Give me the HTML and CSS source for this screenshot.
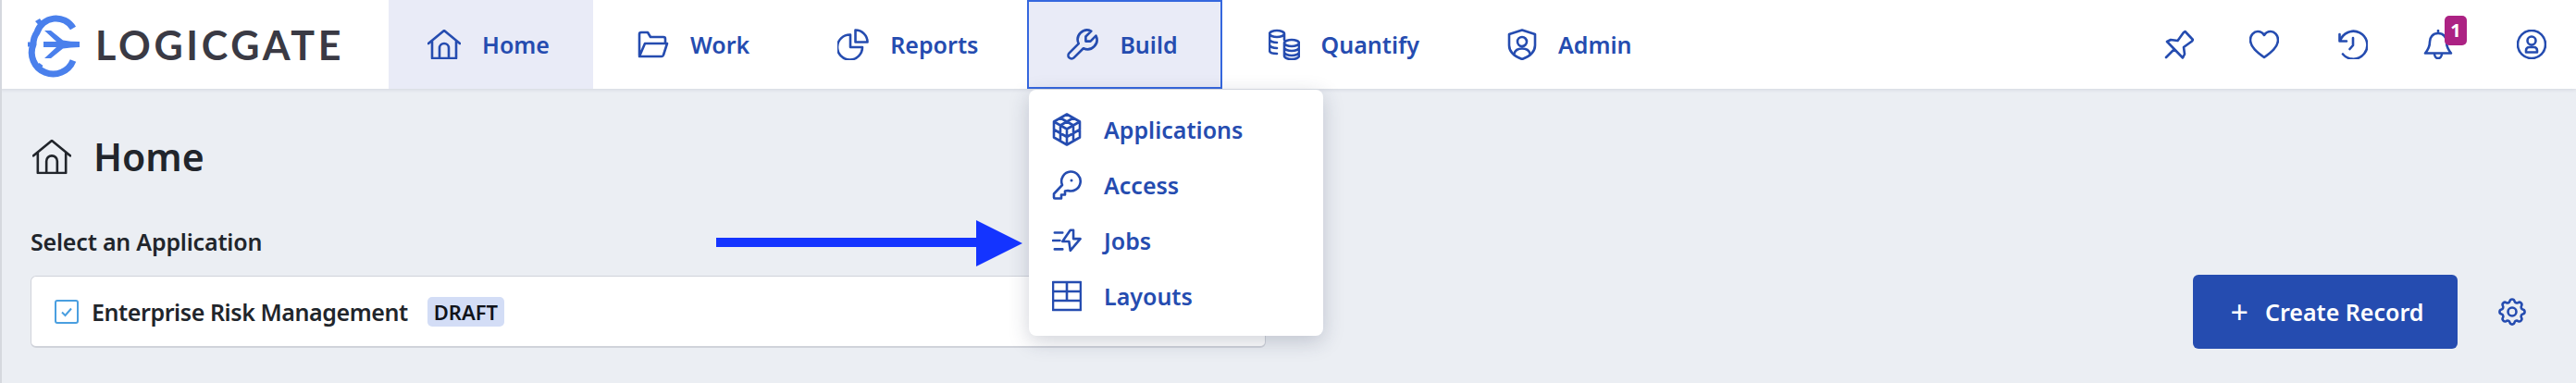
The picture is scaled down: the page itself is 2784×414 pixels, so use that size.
FILE: index.html
```html
<!DOCTYPE html>
<html lang="en">
<head>
    <meta charset="UTF-8">
    <title>Home</title>
    <link rel="stylesheet" href="styles.css">
</head>
<body>

<svg class="defs" width="0" height="0">
    <symbol id="i-home" viewBox="0 0 36 32">
        <path d="M1 15 18 1l17 14M5 12v19h26V12M13 31V20a5 5 0 0 1 10 0v11"/>
    </symbol>
</svg>

<header class="topbar">
    <div class="brand">
        <svg class="logo" viewBox="0 0 56 54">
            <path class="logo-ring" d="M49 9.500A21.500 21.500 0 0 0 10 14 21.500 21.500 0 0 0 6 27a21.500 21.500 0 0 0 43 17.500"/>
            <path class="logo-fill" d="M0 24.500h6v5H0zM8 2l5-3 3.500 5-4 3zM8 52l5 3 3.500-5-4-3zM17 24h14L18 12h7l13 10.500q8 1.500 18 1.500v6q-10 0-18 1.500L25 42h-7l13-12H17z"/>
        </svg>
        <span class="wordmark">LOGICGATE</span>
    </div>

    <nav class="nav">
        <a class="nav-item active" href="#">
            <svg class="icon w36" viewBox="0 0 36 32"><use href="#i-home"/></svg>
            Home
        </a>
        <a class="nav-item" href="#">
            <svg class="icon" viewBox="0 0 34 30"><path d="M2 27V4a2 2 0 0 1 2-2h7l3 5h14a2 2 0 0 1 2 2v4M2 28 8 14h24l-4 12.500a2 2 0 0 1-2 1.500H3a1 1 0 0 1-1-1"/></svg>
            Work
        </a>
        <a class="nav-item" href="#">
            <svg class="icon" viewBox="0 0 34 34"><path d="M14 6.500A13.500 13.500 0 1 0 27 20H14zM19.500 1.500A13 13 0 0 1 32.500 14.500h-13z"/></svg>
            Reports
        </a>
        <a class="nav-item open" href="#">
            <svg class="icon" viewBox="2 2 20 20"><path transform="matrix(-1 0 0 1 24 0)" d="M7 10h3V7L6.500 3.500a6 6 0 0 1 8 8l6 6a2 2 0 0 1-3 3l-6-6a6 6 0 0 1-8-8L7 10"/></svg>
            Build
        </a>
        <a class="nav-item" href="#">
            <svg class="icon" viewBox="0 0 34 34"><path d="M9 2c4 0 8 1.500 8 3.500S13 9 9 9 1 7.500 1 5.500 5 2 9 2zM1 5.500v18c0 2 3 3.500 8 3.500M1 11.500C1 13.500 5 15 9 15M1 17.500c0 2 4 3.500 8 3.500M17 5.500V12M25 12c4 0 8 1.500 8 3.500S29 19 25 19s-8-1.500-8-3.500S21 12 25 12zM17 15.500v14c0 2 4 3.500 8 3.500s8-1.500 8-3.500v-14M17 20.500c0 2 4 3.500 8 3.500s8-1.500 8-3.500M17 25.500c0 2 4 3.500 8 3.500s8-1.500 8-3.500"/></svg>
            Quantify
        </a>
        <a class="nav-item" href="#">
            <svg class="icon w32" viewBox="0 0 32 34"><path d="M16 1.500 30 6v12c0 7-6 12-14 15C8 30 2 25 2 18V6zM16 9a5 5 0 1 1 0 10 5 5 0 0 1 0-10zM7.500 27c1-4 4-5.500 8.500-5.500s7.500 1.500 8.500 5.500"/></svg>
            Admin
        </a>
    </nav>

    <div class="tools">
        <svg class="tool pin" viewBox="0 0 32 32"><path d="M2 30 11 21M3 13l4-2 7.500 1L21 3l1.500-1L31 11l-1 1.500-9 6.500 1 7.500-2 4z"/></svg>
        <svg class="tool" viewBox="0 0 32 32"><path d="M16 30C9 25 1 19 1 11c0-5 4-9 8-9 3 0 5.500 1.500 7 4 1.500-2.500 4-4 7-4 4 0 8 4 8 9 0 8-8 14-15 19z"/></svg>
        <svg class="tool" viewBox="0 0 32 32"><path d="M1.500 5v7.500H9M2 12.500A15 15 0 1 1 5 26.500M16 9v8l-3.500 4"/></svg>
        <div class="bell">
            <svg class="tool" viewBox="0 0 30 32"><path d="M15 1v3M15 4c-6 0-9 4.500-9 9 0 6-2 9-5 12.500h28C26 22 24 19 24 13c0-4.500-3-9-9-9zM11 26c0 3 2 5 4 5s4-2 4-5"/></svg>
            <span class="badge">1</span>
        </div>
        <svg class="tool" viewBox="0 0 32 32"><path d="M16 1a15 15 0 1 1 0 30 15 15 0 0 1 0-30zM16 7.500a4.500 4.500 0 1 1 0 9 4.500 4.500 0 0 1 0-9zM10 24.500v-2c0-2 1.500-3.500 3.500-3.500h5c2 0 3.500 1.500 3.500 3.500v2z"/></svg>
    </div>
</header>

<main class="page">
    <h1 class="page-title">
        <svg class="title-icon" viewBox="0 0 36 32"><use href="#i-home"/></svg>
        Home
    </h1>

    <div class="row">
        <div class="app-select">
            <label class="field-label">Select an Application</label>
            <div class="select-box">
                <span class="check">
                    <svg viewBox="0 0 14 14"><path d="M2 7.500 5.500 11 12 3.500"/></svg>
                </span>
                <span class="app-name">Enterprise Risk Management</span>
                <span class="pill">DRAFT</span>
            </div>
        </div>
        <button class="btn-create" type="button"><span class="plus">+</span>Create Record</button>
        <svg class="gear" viewBox="0 0 24 24"><path d="M10.300 4.300c.4-1.800 3-1.800 3.400 0a1.700 1.700 0 0 0 2.600 1.100c1.500-.9 3.300.8 2.400 2.400a1.700 1.700 0 0 0 1 2.500c1.800.4 1.800 3 0 3.400a1.700 1.700 0 0 0-1 2.600c.9 1.500-.9 3.300-2.400 2.400a1.700 1.700 0 0 0-2.600 1c-.4 1.800-3 1.800-3.400 0a1.700 1.700 0 0 0-2.600-1c-1.500.9-3.300-.9-2.400-2.400a1.700 1.700 0 0 0-1-2.600c-1.800-.4-1.800-3 0-3.400a1.700 1.700 0 0 0 1-2.500c-.9-1.600.9-3.300 2.400-2.400a1.700 1.700 0 0 0 2.600-1.100zM12 9a3 3 0 1 1 0 6 3 3 0 0 1 0-6z"/></svg>
    </div>
</main>

<div class="dropdown">
    <a class="drop-item" href="#">
        <svg class="icon w32 tall" viewBox="0 0 32 36"><path d="M16 1.500 30 9.500v17l-14 8-14-8v-17zM2 9.500l14 8 14-8M16 17.500v17M9 5.500 23 13.500M23 5.500 9 13.500M2 18l14 8 14-8M9 13.500v17M23 13.500v17"/></svg>
        Applications
    </a>
    <a class="drop-item" href="#">
        <svg class="icon w32" viewBox="0 0 32 32"><path d="M20 1.500a10.500 10.500 0 1 1-3 20.500l-3 .5v4h-4v4H3a1 1 0 0 1-1-1v-4l9-9.500A10.500 10.500 0 0 1 20 1.500z"/><circle class="dot" cx="21" cy="11" r="1.500"/></svg>
        Access
    </a>
    <a class="drop-item" href="#">
        <svg class="icon w32" viewBox="0 0 34 26"><path d="M3 4h9M1 13h8M3 23h9M21 1 12 14h7.500L21 24.500 32.500 11H24.500V1z"/></svg>
        Jobs
    </a>
    <a class="drop-item" href="#">
        <svg class="icon w32" viewBox="0 0 32 32"><path d="M1 1h30v30H1zM1 11h30M1 21h30M16 1v20"/></svg>
        Layouts
    </a>
</div>

<svg class="arrow" viewBox="0 0 331 50"><path d="M0 19h281V0l50 25-50 25V29H0z"/></svg>

</body>
</html>
```

FILE: styles.css
```css
* {
    box-sizing: border-box;
}

html,
body {
    margin: 0;
    height: 414px;
    overflow: hidden;
}

body {
    position: relative;
    font-family: "Noto Sans", sans-serif;
    background-color: #ebeef3;
    border-left: 2px solid #d5d8de;
    color: #21252b;
}

.defs {
    position: absolute;
}

symbol path,
.icon path,
.tool path,
.gear path {
    fill: none;
    stroke: currentColor;
    stroke-width: 2.600px;
    stroke-linecap: round;
    stroke-linejoin: round;
    vector-effect: non-scaling-stroke;
}

/* top bar */
.topbar {
    display: flex;
    align-items: stretch;
    height: 96px;
    margin-left: -2px;
    background: white;
    box-shadow: 0 1px 4px rgba(40, 50, 80, 0.12);
    color: #254cb0;
}

.brand {
    display: flex;
    align-items: center;
    width: 420px;
    padding-left: 30px;
    gap: 17px;
}

.logo {
    width: 56px;
    height: 54px;
    overflow: visible;
}

.logo-ring {
    fill: none;
    stroke: #4a80ec;
    stroke-width: 7;
}

.logo-fill {
    fill: #4a80ec;
}

.wordmark {
    font-family: "Lato", sans-serif;
    font-weight: 700;
    font-size: 43px;
    letter-spacing: 3.700px;
    color: #3a3a44;
}

.nav {
    display: flex;
    gap: 6px;
}

.nav-item {
    display: flex;
    align-items: center;
    gap: 23px;
    padding: 0 47px 0 42px;
    font-size: 25px;
    font-weight: 600;
    color: #254cb0;
    text-decoration: none;
}

.nav-item.active {
    background-color: #e9ebf7;
}

.nav-item.open {
    background-color: #e9ebf7;
    border: 2px solid #3567de;
    padding: 0 46px 0 41px;
    margin-right: 2px;
}

.icon {
    width: 34px;
    height: 34px;
    flex-shrink: 0;
    color: #254cb0;
}

.icon.w36 {
    width: 36px;
}

.icon.w32 {
    width: 32px;
}

.icon.tall {
    height: 36px;
}

.icon .dot {
    fill: currentColor;
}

.tools {
    display: flex;
    align-items: center;
    margin-left: auto;
    margin-right: 32px;
    gap: 64px;
}

.tool {
    display: block;
    width: 32px;
    height: 32px;
    color: #254cb0;
}

.tool.pin {
    margin-right: -4px;
}

.bell {
    position: relative;
    margin: 0 5px 0 -4px;
}

.badge {
    position: absolute;
    top: -15px;
    left: 23px;
    width: 24px;
    height: 32px;
    border-radius: 5px;
    background-color: #ac2283;
    color: white;
    font-size: 20px;
    font-weight: 700;
    line-height: 32px;
    text-align: center;
}

/* page content */
.page {
    padding: 0 0 0 31px;
}

.page-title {
    display: flex;
    align-items: center;
    gap: 24px;
    height: 100px;
    margin: 23px 0 25px;
    font-size: 41px;
    font-weight: 600;
}

.title-icon {
    width: 42px;
    height: 39px;
    margin-left: 2px;
    color: #21252b;
}

.row {
    display: flex;
    align-items: flex-end;
}

.field-label {
    display: block;
    margin-bottom: 20px;
    font-size: 25px;
    font-weight: 600;
    letter-spacing: -0.200px;
}

.select-box {
    display: flex;
    align-items: center;
    width: 1335px;
    height: 78px;
    padding-left: 25px;
    background: white;
    border: 1px solid #d0d3da;
    border-bottom-width: 2px;
    border-radius: 6px;
}

.check {
    display: flex;
    align-items: center;
    justify-content: center;
    width: 26px;
    height: 26px;
    margin-right: 14px;
    border: 2px solid #4a9fe0;
    border-radius: 3px;
}

.check svg {
    width: 14px;
    height: 14px;
}

.check path {
    fill: none;
    stroke: #4a9fe0;
    stroke-width: 2;
}

.app-name {
    font-size: 25px;
    font-weight: 600;
    letter-spacing: -0.420px;
}

.pill {
    margin-left: 21px;
    padding: 0 7px;
    height: 32px;
    border-radius: 5px;
    background-color: #d3ddf6;
    color: #10131a;
    font-size: 22px;
    font-weight: 600;
    line-height: 32px;
}

.btn-create {
    display: flex;
    align-items: center;
    justify-content: center;
    gap: 18px;
    width: 286px;
    height: 80px;
    margin: 0 0 -1px 1002px;
    padding: 0 0 0 4px;
    border: none;
    border-radius: 6px;
    background-color: #254cb0;
    color: white;
    font-family: inherit;
    font-size: 25px;
    font-weight: 600;
}

.plus {
    font-size: 34px;
    font-weight: 400;
    line-height: 1;
}

.gear {
    width: 36px;
    height: 36px;
    margin: 0 0 21px 41px;
    color: #254cb0;
}

/* build menu */
.dropdown {
    position: absolute;
    top: 97px;
    left: 1110px;
    display: flex;
    flex-direction: column;
    width: 318px;
    height: 266px;
    padding-top: 13px;
    background: white;
    border-radius: 8px;
    box-shadow: 0 6px 22px rgba(40, 50, 80, 0.22);
}

.drop-item {
    display: flex;
    align-items: center;
    gap: 24px;
    height: 60px;
    padding-left: 25px;
    font-size: 25px;
    font-weight: 600;
    color: #254cb0;
    text-decoration: none;
}

/* annotation */
.arrow {
    position: absolute;
    top: 238px;
    left: 772px;
    width: 331px;
    height: 50px;
    fill: #1434ff;
}
```
